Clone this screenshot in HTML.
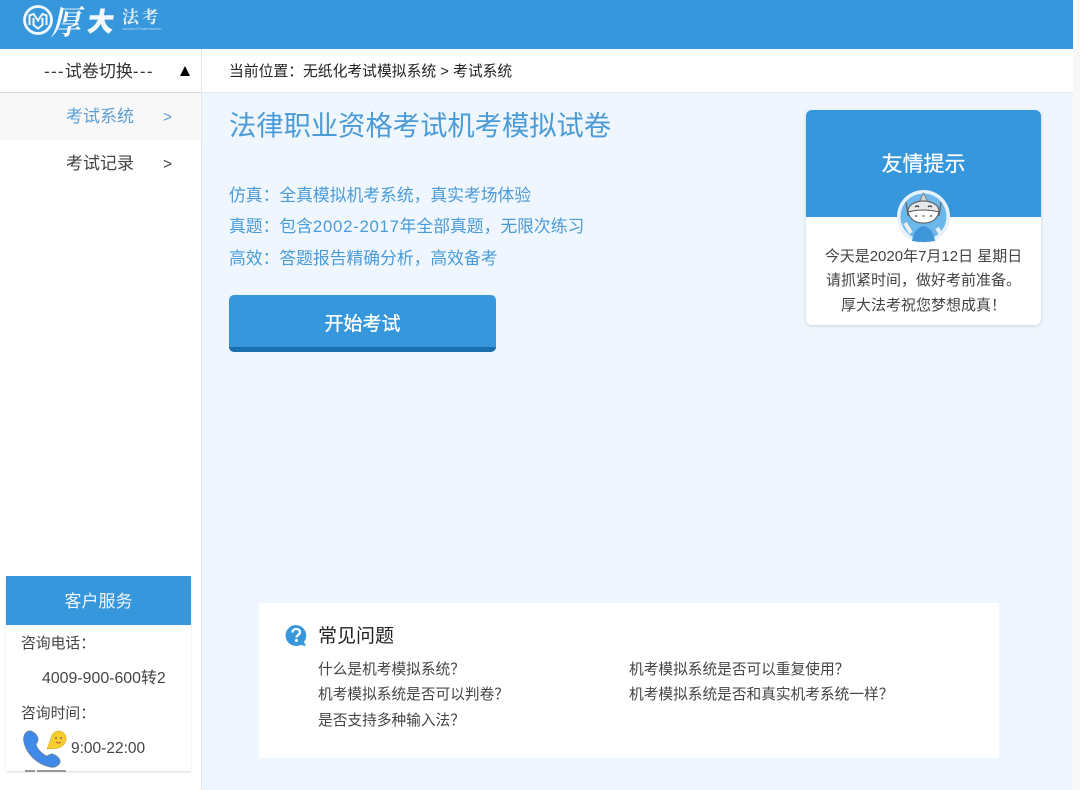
<!DOCTYPE html>
<html lang="zh"><head><meta charset="utf-8"><style>
*{margin:0;padding:0;box-sizing:border-box}
html,body{width:1080px;height:790px;overflow:hidden;background:#fff}
body{position:relative;font-family:"Liberation Sans","Noto Sans CJK SC",sans-serif;color:#333}
.t{position:absolute;white-space:nowrap}
.b{position:absolute}
</style></head><body>
<div class="b" style="left:0;top:0;width:1073px;height:49px;background:#3697dd"></div>
<svg class="b" style="left:22px;top:4px" width="33" height="33" viewBox="0 0 33 33" fill="none" stroke="#f2f8fc">
<circle cx="16" cy="16" r="13.500" stroke-width="2.800"/>
<path d="M7.500 21V11.500L11.500 10L16 16.500L20.500 10L24.500 11.500V21" stroke-width="2"/>
<path d="M11.500 14V21L16 24.500L20.500 21V14" stroke-width="2"/>
</svg>
<div class="t" style="left:54px;top:2px;font:bold 33px/38px 'Noto Serif CJK SC',serif;color:#f2f8fc;transform:skewX(-12deg) scaleX(.88);transform-origin:left center">厚</div>
<div class="t" style="left:88px;top:3px;font:900 26px/36px 'Noto Sans CJK SC',sans-serif;color:#f2f8fc;transform:skewX(-8deg);-webkit-text-stroke:.5px #f2f8fc">大</div>
<div class="t" style="left:122px;top:6px;font:bold 17px/20px 'Noto Serif CJK SC',serif;color:#e3f0fa;letter-spacing:2.500px">法考</div>
<div class="t" style="left:122px;top:27px;font-size:3.500px;line-height:5px;color:#cfe5f5;letter-spacing:.4px">Judicial Examination</div>

<div class="b" style="left:0;top:49px;width:202px;height:741px;background:#fff;border-right:1px solid #e4e6e8"></div>
<div class="b" style="left:202px;top:93px;width:871px;height:697px;background:#eff6fd"></div>
<div class="b" style="left:202px;top:92px;width:871px;height:1px;background:#e2ebf2"></div>
<div class="b" style="left:1073px;top:49px;width:7px;height:741px;background:#f8f8f8"></div>
<div class="b" style="left:0;top:92px;width:201px;height:1px;background:#d8d8d8"></div>
<div class="b" style="left:0;top:93px;width:201px;height:47px;background:#f9f8f8"></div>

<div class="t" style="left:44px;top:60px;font-size:17px;line-height:24px;color:#333"><span style="letter-spacing:1.300px">---</span>试卷切换<span style="letter-spacing:1.300px">---</span></div>
<div class="b" style="left:180px;top:66px;width:0;height:0;border-left:5.500px solid transparent;border-right:5.500px solid transparent;border-bottom:10px solid #000"></div>
<div class="t" style="left:66px;top:105px;font-size:17px;line-height:24px;color:#5b9fd6">考试系统</div>
<div class="t" style="left:163px;top:106px;font-size:15.500px;line-height:24px;color:#5b9fd6">&gt;</div>
<div class="t" style="left:66px;top:152px;font-size:17px;line-height:24px;color:#444">考试记录</div>
<div class="t" style="left:163px;top:153px;font-size:15.500px;line-height:24px;color:#444">&gt;</div>

<div class="t" style="left:229px;top:61px;font-size:14.800px;line-height:22px;color:#222">当前位置：无纸化考试模拟系统 &gt; 考试系统</div>

<div class="t" style="left:229px;top:107px;font-size:27.300px;line-height:38px;color:#4a9bd8">法律职业资格考试机考模拟试卷</div>
<div class="t" style="left:229px;top:184px;font-size:16.800px;line-height:24px;color:#4a9bd8">仿真：全真模拟机考系统，真实考场体验</div>
<div class="t" style="left:229px;top:215px;font-size:16.800px;line-height:24px;color:#4a9bd8">真题：包含<span style="letter-spacing:.72px">2002-2017</span>年全部真题，无限次练习</div>
<div class="t" style="left:229px;top:247px;font-size:16.800px;line-height:24px;color:#4a9bd8">高效：答题报告精确分析，高效备考</div>

<div class="b" style="left:229px;top:295px;width:267px;height:57px;background:#3697dd;border-bottom:5px solid #1a6fae;border-radius:5px"></div>
<div class="t" style="left:229px;top:310px;width:267px;text-align:center;font-size:19px;line-height:30px;color:#fff;-webkit-text-stroke:.35px #fff">开始考试</div>

<div class="b" style="left:806px;top:110px;width:235px;height:215px;background:#fff;border-radius:6px;box-shadow:0 1px 3px rgba(120,150,180,.35);overflow:hidden">
<div style="height:107px;background:#3697dd"></div></div>
<div class="t" style="left:806px;top:149px;width:235px;text-align:center;font-size:21px;line-height:32px;color:#fff;-webkit-text-stroke:.2px #fff">友情提示</div>
<svg class="b" style="left:897px;top:190px" width="53" height="53" viewBox="0 0 53 53">
<circle cx="26.500" cy="26.500" r="26.500" fill="#e6f2fb"/>
<circle cx="26.500" cy="26.500" r="23" fill="#6cb8ec"/>
<path d="M15 51Q17 38 26.500 36Q36 38 38 51Q26.500 53 15 51Z" fill="#3f96d8"/>
<path d="M26.500 3L22 13H31Z" fill="#cfd6da" stroke="#777" stroke-width=".8"/>
<path d="M9 12L11 26M44 12L42 26" stroke="#666" stroke-width="1.200"/>
<ellipse cx="26.500" cy="21" rx="15.500" ry="10" fill="#e6e9eb" stroke="#666" stroke-width="1.200"/>
<path d="M11 22Q26.500 18 42 22Q39 33 26.500 33Q14 33 11 22Z" fill="#fff" stroke="#555"/>
<path d="M18 26h2M25.500 26h2M33 26h2M18 17q2-2 4 0M31 17q2-2 4 0" stroke="#444" stroke-width="1.300" fill="none"/>
<path d="M8 33l6 10M40 38l4 6" stroke="#eee" stroke-width="4"/>
</svg>
<div class="t" style="left:806px;top:246px;width:235px;text-align:center;font-size:15px;line-height:22px;color:#444">今天是2020年7月12日 星期日</div>
<div class="t" style="left:806px;top:270px;width:235px;text-align:center;font-size:15px;line-height:22px;color:#444">请抓紧时间，做好考前准备。</div>
<div class="t" style="left:806px;top:295px;width:235px;text-align:center;font-size:15px;line-height:22px;color:#444">厚大法考祝您梦想成真！</div>

<div class="b" style="left:6px;top:576px;width:185px;height:195px;background:#fff;box-shadow:0 1px 2px rgba(0,0,0,.14)"></div>
<div class="b" style="left:6px;top:576px;width:185px;height:49px;background:#3697dd"></div>
<div class="t" style="left:6px;top:590px;width:185px;text-align:center;font-size:17px;line-height:24px;color:#f2f8fc">客户服务</div>
<div class="t" style="left:21px;top:633px;font-size:14.800px;line-height:22px;color:#444">咨询电话：</div>
<div class="t" style="left:42px;top:668px;font-size:15.900px;line-height:22px;color:#444">4009-900-600转2</div>
<div class="t" style="left:21px;top:703px;font-size:14.800px;line-height:22px;color:#444">咨询时间：</div>
<svg class="b" style="left:22px;top:728px" width="46" height="46" viewBox="0 0 46 46">
<path d="M5 4C1 7 1 13 4 20C9 30 18 37 29 39C34 40 38 36 38 33C37 29 33 27 30 26C27 26 26 29 24 28C20 26 15 21 14 17C14 15 16 14 16 11C15 6 9 1 5 4Z" fill="#3f8ae8" stroke="#5d7fa8" stroke-width="1"/>
<path d="M25 21L29 10C30 5 33 3 37 3C41 3 45 7 44 12C43 18 37 21 32 20.500Z" fill="#f7cd2e" stroke="#c9a21f" stroke-width=".5"/>
<circle cx="34" cy="10" r="1" fill="#865"/><circle cx="39" cy="10" r="1" fill="#865"/><path d="M34 14q2.500 2 5 0" stroke="#c0504d" fill="none"/>
<path d="M3 43h10M15 43h29" stroke="#777" stroke-width="1.500"/>
</svg>
<div class="t" style="left:71px;top:738px;font-size:15.500px;line-height:22px;color:#444">9:00-22:00</div>

<div class="b" style="left:259px;top:603px;width:740px;height:155px;background:#fff"></div>
<svg class="b" style="left:285px;top:624px" width="23" height="23" viewBox="0 0 23 23">
<path d="M11 1A10.500 10.500 0 1 0 15.500 21L21 22L19 18A10.500 10.500 0 0 0 11 1Z" fill="#3697dd"/>
<path d="M7.500 8.500C7.500 6 9.500 5 11.300 5C13.500 5 15 6.500 15 8.300C15 10.800 11.500 10.800 11.500 13.500" fill="none" stroke="#fff" stroke-width="2.300"/>
<circle cx="11.500" cy="16.500" r="1.500" fill="#fff"/>
</svg>
<div class="t" style="left:318px;top:623px;font-size:19px;line-height:27px;color:#222">常见问题</div>
<div class="t" style="left:318px;top:660px;font-size:14.700px;line-height:21px;color:#444">什么是机考模拟系统？</div>
<div class="t" style="left:318px;top:685px;font-size:14.700px;line-height:21px;color:#444">机考模拟系统是否可以判卷？</div>
<div class="t" style="left:318px;top:711px;font-size:14.700px;line-height:21px;color:#444">是否支持多种输入法？</div>
<div class="t" style="left:629px;top:660px;font-size:14.700px;line-height:21px;color:#444">机考模拟系统是否可以重复使用？</div>
<div class="t" style="left:629px;top:685px;font-size:14.700px;line-height:21px;color:#444">机考模拟系统是否和真实机考系统一样？</div>
</body></html>
